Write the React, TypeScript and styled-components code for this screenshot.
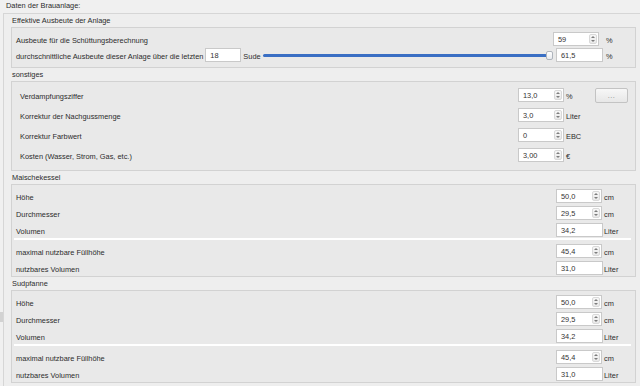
import React from 'react';
import styled, { createGlobalStyle } from 'styled-components';

const GlobalStyle = createGlobalStyle`
  html, body {
    margin: 0;
    padding: 0;
    background: #f0f0f0;
  }
  body {
    font-family: "Liberation Sans", Arial, sans-serif;
    font-size: 7.4px;
    color: #2b2b2b;
  }
`;

const Page = styled.div`
  display: flex;
  width: 640px;
  height: 386px;
  overflow: hidden;
  background: #f0f0f0;
`;

// schmaler Streifen links mit dem Splitter-Griff
const SideStrip = styled.div`
  width: 3px;
  display: flex;
  flex-direction: column;
`;

const Handle = styled.div`
  margin-top: 312px;
  height: 10px;
  background: #d2d2d2;
`;

const Main = styled.div`
  flex: 1;
  display: flex;
  flex-direction: column;
`;

const PanelTitle = styled.div`
  height: 13px;
  line-height: 12px;
  padding-left: 3px;
  white-space: nowrap;
`;

const Frame = styled.div`
  flex: 1;
  border-top: 1px solid #d6d6d6;
  border-left: 1px solid #d6d6d6;
  background: #eeeeee;
  padding: 0 4px 0 7px;
`;

const GroupTitle = styled.div`
  height: 13px;
  line-height: 13px;
  padding-left: 1px;
  white-space: nowrap;
`;

const Row = styled.div`
  display: flex;
  align-items: center;
  height: 14px;
`;

const Box = styled.div<{ $pad: string; $indent: number; $right: number }>`
  display: flex;
  flex-direction: column;
  border: 1px solid #d2d2d2;
  background: #e9e9e9;
  padding: ${(p) => p.$pad};

  ${Row} {
    padding-left: ${(p) => p.$indent}px;
    padding-right: ${(p) => p.$right}px;
  }
`;

const Rows = styled.div<{ $gap: number }>`
  display: flex;
  flex-direction: column;
  gap: ${(p) => p.$gap}px;
`;

const Divider = styled.div`
  height: 2px;
  background: #ffffff;
  margin: 1px 4px 4px 1px;
`;

const Label = styled.span<{ $grow?: boolean }>`
  flex: ${(p) => (p.$grow ? 1 : 'none')};
  white-space: nowrap;
  line-height: 13px;
  padding-top: 2px;
`;

const Caption = styled.span`
  margin-left: 2px;
  white-space: nowrap;
  line-height: 13px;
  padding-top: 2px;
`;

const Slot = styled.div<{ $w: number }>`
  width: ${(p) => p.$w}px;
  flex: none;
  display: flex;
`;

const Unit = styled.span<{ $w: number; $pad?: number }>`
  width: ${(p) => p.$w}px;
  padding-left: ${(p) => p.$pad ?? 0}px;
  padding-top: 2px;
  line-height: 13px;
  box-sizing: border-box;
  flex: none;
  white-space: nowrap;
`;

const Field = styled.div<{ $w: number; $ml?: number }>`
  box-sizing: border-box;
  width: ${(p) => p.$w}px;
  height: 14px;
  margin-left: ${(p) => p.$ml ?? 0}px;
  flex: none;
  display: flex;
  align-items: center;
  background: #ffffff;
  border: 1px solid #c9c9c9;
  color: #333;
`;

const Value = styled.span`
  flex: 1;
  padding: 1px 0 0 4px;
  white-space: nowrap;
`;

const Arrows = styled.div`
  width: 8px;
  height: 10px;
  margin-right: 1px;
  display: flex;
  flex-direction: column;
  justify-content: space-around;
  align-items: center;
  border: 1px solid #d9d9d9;
  border-radius: 2px;
  background: linear-gradient(#f7f7f7, #e9e9e9);
  box-sizing: border-box;
`;

const Tri = styled.span<{ $dir: 'up' | 'down' }>`
  width: 0;
  height: 0;
  border-left: 2px solid transparent;
  border-right: 2px solid transparent;
  ${(p) =>
    p.$dir === 'up'
      ? 'border-bottom: 2px solid #7d7d7d;'
      : 'border-top: 2px solid #7d7d7d;'}
`;

const Slider = styled.div`
  flex: 1;
  height: 14px;
  margin: 0 3px 0 2px;
  display: flex;
  align-items: center;
`;

const Groove = styled.div`
  flex: 1;
  height: 3px;
  border-radius: 2px;
  background: #3a6fc4;
`;

const Knob = styled.div`
  width: 7px;
  height: 9px;
  box-sizing: border-box;
  margin-left: -1px;
  border: 1px solid #aeb4bc;
  border-radius: 2px;
  background: linear-gradient(#ffffff, #e8eaee);
`;

const MoreButton = styled.div`
  width: 33px;
  height: 15px;
  box-sizing: border-box;
  flex: none;
  display: flex;
  align-items: center;
  justify-content: center;
  border: 1px solid #c3c3c3;
  border-radius: 2px;
  background: linear-gradient(#f7f7f7, #e7e7e7);
  color: #8a8a8a;
  letter-spacing: 0.5px;
`;

const ButtonSlot = styled.div`
  width: 33px;
  flex: none;
  display: flex;
`;

const SpinBox = ({ value }: { value: string }) => (
  <Field $w={46}>
    <Value>{value}</Value>
    <Arrows>
      <Tri $dir="up" />
      <Tri $dir="down" />
    </Arrows>
  </Field>
);

const TextBox = ({ value, w = 47, ml }: { value: string; w?: number; ml?: number }) => (
  <Field $w={w} $ml={ml}>
    <Value>{value}</Value>
  </Field>
);

type Item = { label: string; value: string; unit: string; spin: boolean };

const upper: Item[] = [
  { label: 'Höhe', value: '50,0', unit: 'cm', spin: true },
  { label: 'Durchmesser', value: '29,5', unit: 'cm', spin: true },
  { label: 'Volumen', value: '34,2', unit: 'Liter', spin: false },
];

const lower: Item[] = [
  { label: 'maximal nutzbare Füllhöhe', value: '45,4', unit: 'cm', spin: true },
  { label: 'nutzbares Volumen', value: '31,0', unit: 'Liter', spin: false },
];

const misc = [
  { label: 'Verdampfungsziffer', value: '13,0', unit: '%' },
  { label: 'Korrektur der Nachgussmenge', value: '3,0', unit: 'Liter' },
  { label: 'Korrektur Farbwert', value: '0', unit: 'EBC' },
  { label: 'Kosten (Wasser, Strom, Gas, etc.)', value: '3,00', unit: '€' },
];

const VesselRow = ({ item }: { item: Item }) => (
  <Row>
    <Label $grow>{item.label}</Label>
    <Slot $w={48}>{item.spin ? <SpinBox value={item.value} /> : <TextBox value={item.value} />}</Slot>
    <Unit $w={27}>{item.unit}</Unit>
  </Row>
);

const Vessel = ({ title }: { title: string }) => (
  <div>
    <GroupTitle>{title}</GroupTitle>
    <Box $pad="4px 0 1px 1px" $indent={3} $right={4}>
      <Rows $gap={3}>
        {upper.map((it) => (
          <VesselRow key={it.label} item={it} />
        ))}
      </Rows>
      <Divider />
      <Rows $gap={3}>
        {lower.map((it) => (
          <VesselRow key={it.label} item={it} />
        ))}
      </Rows>
    </Box>
  </div>
);

export default function App() {
  return (
    <>
      <GlobalStyle />
      <Page>
        <SideStrip>
          <Handle />
        </SideStrip>
        <Main>
          <PanelTitle>Daten der Brauanlage:</PanelTitle>
          <Frame>
            <div>
              <GroupTitle>Effektive Ausbeute der Anlage</GroupTitle>
              <Box $pad="4px 0 5px 1px" $indent={3} $right={4}>
                <Rows $gap={2}>
                  <Row>
                    <Label $grow>Ausbeute für die Schüttungsberechnung</Label>
                    <Slot $w={53}>
                      <SpinBox value="59" />
                    </Slot>
                    <Unit $w={25}>%</Unit>
                  </Row>
                  <Row>
                    <Label>durchschnittliche Ausbeute dieser Anlage über die letzten</Label>
                    <TextBox value="18" w={36} ml={2} />
                    <Caption>Sude</Caption>
                    <Slider>
                      <Groove />
                      <Knob />
                    </Slider>
                    <TextBox value="61,5" />
                    <Unit $w={28} $pad={3}>
                      %
                    </Unit>
                  </Row>
                </Rows>
              </Box>
            </div>

            <div>
              <GroupTitle>sonstiges</GroupTitle>
              <Box $pad="6px 0 8px 1px" $indent={7} $right={7}>
                <Rows $gap={6}>
                  {misc.map((m, i) => (
                    <Row key={m.label}>
                      <Label $grow>{m.label}</Label>
                      <Slot $w={48}>
                        <SpinBox value={m.value} />
                      </Slot>
                      <Unit $w={29}>{m.unit}</Unit>
                      <ButtonSlot>{i === 0 && <MoreButton>...</MoreButton>}</ButtonSlot>
                    </Row>
                  ))}
                </Rows>
              </Box>
            </div>

            <Vessel title="Maischekessel" />
            <Vessel title="Sudpfanne" />
          </Frame>
        </Main>
      </Page>
    </>
  );
}
